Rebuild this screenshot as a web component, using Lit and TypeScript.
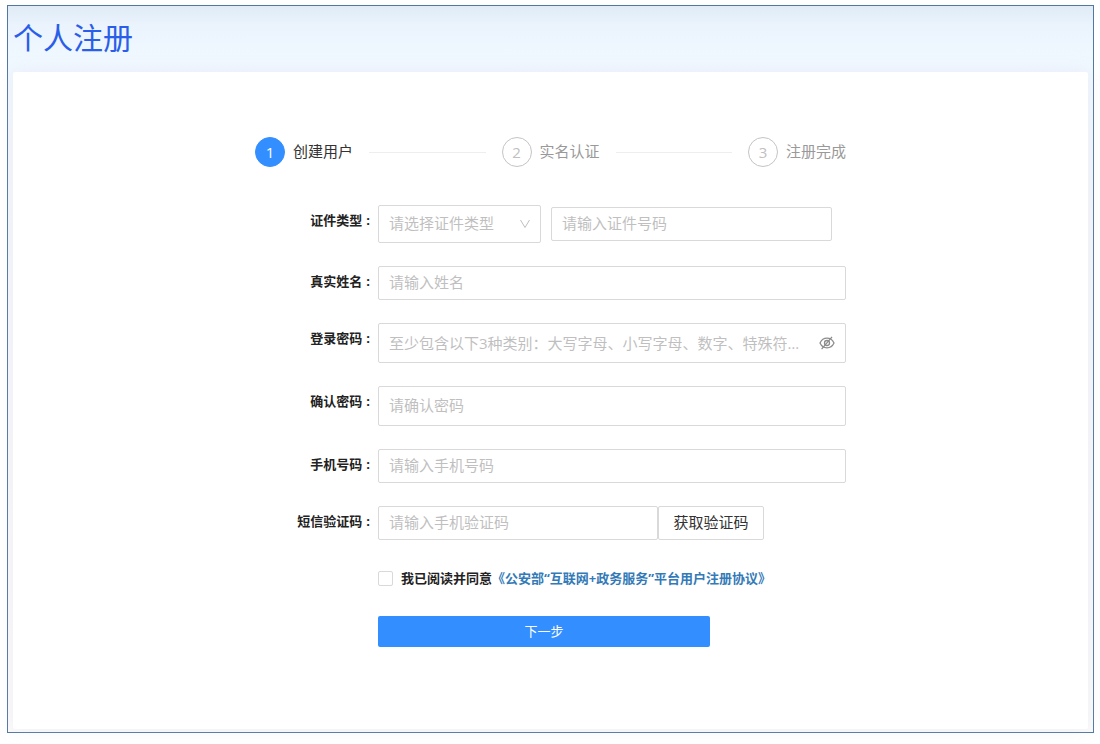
import { LitElement, html, css } from "lit";
import { customElement, property, state } from "lit/decorators.js";
import { classMap } from "lit/directives/class-map.js";

@customElement("register-steps")
export class RegisterSteps extends LitElement {
  @property({ type: Array }) steps: string[] = [];
  @property({ type: Number }) current = 0;

  static styles = css`
    :host {
      display: block;
    }
    .steps {
      display: flex;
      gap: 16px;
      margin: 0;
      padding: 0;
      list-style: none;
    }
    .step {
      display: flex;
      align-items: center;
      gap: 8px;
      flex: 1 1 auto;
      font-size: 15px;
      line-height: 28px;
      color: #999;
      white-space: nowrap;
    }
    .step:last-child {
      flex: none;
    }
    .step:not(:last-child)::after {
      content: "";
      flex: 1;
      height: 1px;
      margin-left: 8px;
      background: #eee;
    }
    .num {
      box-sizing: border-box;
      width: 30px;
      height: 30px;
      border: 1px solid #c4c4c4;
      border-radius: 50%;
      text-align: center;
      color: #c0c0c0;
    }
    .name {
      padding-bottom: 2px;
    }
    .active {
      color: #333;
    }
    .active .num {
      background: #338fff;
      border-color: #338fff;
      color: #fff;
    }
  `;

  render() {
    return html`<ol class="steps">
      ${this.steps.map(
        (title, i) => html`<li class=${classMap({ step: true, active: i === this.current })}>
          <span class="num">${i + 1}</span><span class="name">${title}</span>
        </li>`
      )}
    </ol>`;
  }
}

@customElement("app-root")
export class AppRoot extends LitElement {
  @state() private showPassword = false;

  static styles = css`
    :host {
      display: flex;
      box-sizing: border-box;
      min-height: 100vh;
      padding: 5px 6px 11px 7px;
      background: #fff;
      font-family: "Open Sans", "Noto Sans CJK SC", sans-serif;
    }
    * {
      box-sizing: border-box;
    }
    .page {
      flex: 1;
      min-width: 0;
      display: flex;
      flex-direction: column;
      padding: 0 5px 3px;
      border: 1px solid #5277a3;
      background: linear-gradient(#e0ebf6, #ebf4fd 20px, #f0f8ff 55px, #f3f7fb 140px, #fafafa);
    }
    .title {
      margin: 0;
      padding-bottom: 2px;
      font-size: 30px;
      line-height: 64px;
      font-weight: 400;
      color: #2a5ee8;
    }
    .card {
      flex: 1;
      padding: 65px 16px 40px;
      border-radius: 2px;
      background: #fff;
      box-shadow: 0 0 16px rgba(210, 205, 230, 0.25);
    }
    .content {
      max-width: 591px;
      margin: 0 auto;
    }
    .form {
      display: grid;
      grid-template-columns: 115px minmax(0, 1fr);
      column-gap: 8px;
      row-gap: 23px;
      margin-top: 38px;
    }
    .label {
      font-size: 13px;
      line-height: 30px;
      font-weight: 700;
      color: #222;
      text-align: right;
      white-space: nowrap;
    }
    .label::after {
      content: ":";
      margin-left: 4px;
    }
    .text,
    .select,
    .code {
      font: inherit;
      font-size: 15px;
      line-height: 22px;
      height: 34px;
      min-width: 0;
      border: 1px solid #d9d9d9;
      border-radius: 2px;
      background: #fff;
      color: #333;
    }
    .text {
      width: 100%;
      padding: 0 10px 2px;
      text-overflow: ellipsis;
      outline: none;
    }
    .text:focus,
    .select:focus {
      border-color: #338fff;
    }
    .text::placeholder {
      color: #bfbfbf;
      opacity: 1;
    }
    .tall {
      height: 40px;
    }
    .pair {
      display: grid;
      grid-template-columns: 163px minmax(0, 281px);
      align-items: center;
      gap: 10px;
    }
    .picker,
    .secret {
      display: grid;
      align-items: center;
    }
    .picker > *,
    .secret > * {
      grid-area: 1 / 1;
    }
    .select {
      appearance: none;
      width: 100%;
      height: 38px;
      padding: 0 30px 2px 10px;
      color: #bfbfbf;
      outline: none;
    }
    .arrow {
      justify-self: end;
      margin-right: 10px;
      pointer-events: none;
    }
    .secret .text {
      padding: 0 39px 0 10px;
    }
    .eye {
      justify-self: end;
      display: flex;
      margin-right: 11px;
      padding: 0;
      border: 0;
      background: none;
      color: #8c8c8c;
      cursor: pointer;
    }
    .sms {
      display: grid;
      grid-template-columns: minmax(0, 280px) 106px;
    }
    .code {
      padding: 0 0 2px;
      cursor: pointer;
    }
    .below {
      grid-column: 2;
    }
    .agree {
      display: flex;
      align-items: center;
      gap: 8px;
      height: 30px;
      font-size: 13px;
      line-height: 20px;
      font-weight: 700;
      color: #222;
      white-space: nowrap;
    }
    .check {
      appearance: none;
      width: 15px;
      height: 15px;
      margin: 0;
      border: 1px solid #d9d9d9;
      border-radius: 2px;
      background: #fff;
    }
    .check:checked {
      background: #338fff;
      border-color: #338fff;
    }
    .link {
      color: #337ab7;
      text-decoration: none;
    }
    .next {
      width: 332px;
      max-width: 100%;
      height: 31px;
      padding: 0 0 2px;
      border: 0;
      border-radius: 2px;
      background: #338fff;
      color: #fff;
      font: inherit;
      font-size: 13px;
      cursor: pointer;
    }
  `;

  private field(id: string, label: string, placeholder: string) {
    return html`<label class="label" for=${id}>${label}</label>
      <input class="text" id=${id} type="text" placeholder=${placeholder} />`;
  }

  render() {
    return html`<main class="page">
      <h1 class="title">个人注册</h1>
      <section class="card">
        <div class="content">
          <register-steps .steps=${["创建用户", "实名认证", "注册完成"]} .current=${0}></register-steps>
          <form class="form" @submit=${(e: Event) => e.preventDefault()}>
            <label class="label" for="idtype">证件类型</label>
            <div class="pair">
              <div class="picker">
                <select class="select" id="idtype">
                  <option value="">请选择证件类型</option>
                </select>
                <svg class="arrow" width="12" height="12" viewBox="0 0 12 12" fill="none" stroke="#bfbfbf" aria-hidden="true">
                  <path d="M1.500 2 6 9.500 10.500 2" />
                </svg>
              </div>
              <input class="text" type="text" aria-label="证件号码" placeholder="请输入证件号码" />
            </div>

            ${this.field("name", "真实姓名", "请输入姓名")}

            <label class="label" for="pwd">登录密码</label>
            <div class="secret">
              <input
                class="text tall"
                id="pwd"
                type=${this.showPassword ? "text" : "password"}
                placeholder="至少包含以下3种类别：大写字母、小写字母、数字、特殊符号，长度不少于8位"
              />
              <button class="eye" type="button" aria-label="显示密码" @click=${() => (this.showPassword = !this.showPassword)}>
                <svg width="16" height="16" viewBox="0 0 16 16" fill="none" stroke="currentColor" stroke-width="1.300" aria-hidden="true">
                  <path d="M1 8C2.500 4.800 4.900 3.200 8 3.200S13.500 4.800 15 8c-1.500 3.200-3.900 4.800-7 4.800S2.500 11.200 1 8Z" />
                  <circle cx="8" cy="8" r="2.500" />
                  <path d="M13 1.800 2.600 14.200" />
                </svg>
              </button>
            </div>

            <label class="label" for="pwd2">确认密码</label>
            <input class="text tall" id="pwd2" type="password" placeholder="请确认密码" />

            ${this.field("phone", "手机号码", "请输入手机号码")}

            <label class="label" for="sms">短信验证码</label>
            <div class="sms">
              <input class="text" id="sms" type="text" placeholder="请输入手机验证码" />
              <button class="code" type="button">获取验证码</button>
            </div>

            <div class="below agree">
              <input class="check" id="agree" type="checkbox" />
              <span><label for="agree">我已阅读并同意</label><a class="link" href="#">《公安部“互联网+政务服务”平台用户注册协议》</a></span>
            </div>
            <button class="below next" type="submit">下一步</button>
          </form>
        </div>
      </section>
    </main>`;
  }
}
